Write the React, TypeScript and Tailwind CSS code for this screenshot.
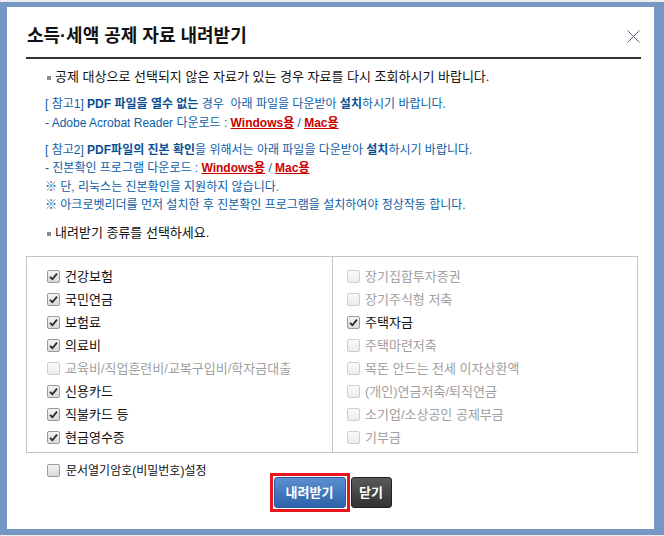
import { ReactNode } from "react";

const FONT = { fontFamily: "'Liberation Sans', 'Noto Sans CJK KR', sans-serif" };

interface CheckItem {
  label: string;
  checked: boolean;
  disabled?: boolean;
}

const leftItems: CheckItem[] = [
  { label: "건강보험", checked: true },
  { label: "국민연금", checked: true },
  { label: "보험료", checked: true },
  { label: "의료비", checked: true },
  { label: "교육비/직업훈련비/교복구입비/학자금대출", checked: false, disabled: true },
  { label: "신용카드", checked: true },
  { label: "직불카드 등", checked: true },
  { label: "현금영수증", checked: true },
];

const rightItems: CheckItem[] = [
  { label: "장기집합투자증권", checked: false, disabled: true },
  { label: "장기주식형 저축", checked: false, disabled: true },
  { label: "주택자금", checked: true },
  { label: "주택마련저축", checked: false, disabled: true },
  { label: "목돈 안드는 전세 이자상환액", checked: false, disabled: true },
  { label: "(개인)연금저축/퇴직연금", checked: false, disabled: true },
  { label: "소기업/소상공인 공제부금", checked: false, disabled: true },
  { label: "기부금", checked: false, disabled: true },
];

const Box = ({ checked, disabled }: { checked: boolean; disabled?: boolean }) => (
  <span
    className={`relative flex size-[13px] shrink-0 items-center justify-center rounded-[2px] border ${
      disabled
        ? "border-[#cfcfcf] bg-gradient-to-b from-[#fafafa] to-[#ececec]"
        : "border-[#9a9a9a] bg-gradient-to-b from-[#f4f4f4] to-[#d9d9d9]"
    }`}
  >
    {checked && (
      <svg width="9" height="9" viewBox="0 0 9 9">
        <path d="M1 4.8 L3.4 7.2 L8 1.6" fill="none" stroke="#2b2b2b" strokeWidth="1.8" />
      </svg>
    )}
  </span>
);

const CheckRow = ({ item }: { item: CheckItem }) => (
  <div className="flex h-[23px] items-center gap-[5px]">
    <Box checked={item.checked} disabled={item.disabled} />
    <span className={`text-[13px] ${item.disabled ? "text-[#a0a0a0]" : "text-[#111]"}`}>
      {item.label}
    </span>
  </div>
);

const Blue = ({ children }: { children: ReactNode }) => (
  <b className="font-bold text-[#0a4f92]">{children}</b>
);

const RedLink = ({ children }: { children: ReactNode }) => (
  <a className="font-bold text-[#cc0000] underline">{children}</a>
);

const Bullet = () => (
  <span className="mr-[4px] inline-block size-[4px] bg-[#8c8c8c] align-middle" />
);

export default function App() {
  return (
    <div className="h-[536px] w-[664px] bg-[#ededed] pt-[2px]" style={FONT}>
      <div className="flex h-[533px] flex-col border-b-[6px] border-l-[7px] border-r-[10px] border-t-[5px] border-[#7597c4] bg-white">
        {/* Header */}
        <div className="flex h-[50px] items-center justify-between pl-[20px] pr-[14px] pt-[8px]">
          <h1 className="text-[18px] font-bold text-[#111]">소득·세액 공제 자료 내려받기</h1>
          <svg width="13" height="13" viewBox="0 0 13 13">
            <path d="M0.5 0.5 L12.5 12.5 M12.5 0.5 L0.5 12.5" stroke="#5a6080" strokeWidth="1" />
          </svg>
        </div>
        <div className="ml-[19px] mr-[13px] h-[2px] bg-[#333]" />

        {/* Notices */}
        <div className="text-[12px] leading-[18px]">
          <p className="ml-[40px] mt-[9px] h-[18px] text-[13px] text-[#111]">
            <Bullet />
            공제 대상으로 선택되지 않은 자료가 있는 경우 자료를 다시 조회하시기 바랍니다.
          </p>
          <div className="ml-[38px] mt-[9px] text-[#0b5ea6]">
            <p className="h-[19px]">
              [ 참고1] <Blue>PDF 파일을 열수 없는</Blue> 경우&nbsp; 아래 파일을 다운받아{" "}
              <Blue>설치</Blue>하시기 바랍니다.
            </p>
            <p className="h-[18px]">
              - Adobe Acrobat Reader 다운로드 : <RedLink>Windows용</RedLink> /{" "}
              <RedLink>Mac용</RedLink>
            </p>
          </div>
          <div className="ml-[38px] mt-[9px] text-[#0b5ea6]">
            <p className="h-[18px]">
              [ 참고2] <Blue>PDF파일의 진본 확인</Blue>을 위해서는 아래 파일을 다운받아{" "}
              <Blue>설치</Blue>하시기 바랍니다.
            </p>
            <p className="h-[19px]">
              - 진본확인 프로그램 다운로드 : <RedLink>Windows용</RedLink> /{" "}
              <RedLink>Mac용</RedLink>
            </p>
            <p className="h-[18px]">※ 단, 리눅스는 진본확인을 지원하지 않습니다.</p>
            <p className="h-[18px]">
              ※ 아크로벳리더를 먼저 설치한 후 진본확인 프로그램을 설치하여야 정상작동 합니다.
            </p>
          </div>
          <p className="ml-[40px] mt-[10px] h-[18px] text-[13px] text-[#111]">
            <Bullet />
            내려받기 종류를 선택하세요.
          </p>
        </div>

        {/* Check list */}
        <div className="ml-[19px] mt-[14px] flex h-[197px] w-[612px] border border-[#c4c4c4]">
          <div className="w-[306px] border-r border-[#c4c4c4] pl-[20px] pt-[8px]">
            {leftItems.map((item) => (
              <CheckRow key={item.label} item={item} />
            ))}
          </div>
          <div className="flex-1 pl-[14px] pt-[8px]">
            {rightItems.map((item) => (
              <CheckRow key={item.label} item={item} />
            ))}
          </div>
        </div>

        {/* Password option */}
        <div className="ml-[40px] mt-[13px] flex h-[9px] items-center gap-[6px]">
          <Box checked={false} />
          <span className="text-[12px] text-[#111]">문서열기암호(비밀번호)설정</span>
        </div>

        {/* Buttons */}
        <div className="mt-[-2px] flex items-start justify-center gap-[1px]">
          <div className="border-[3px] border-[#e8141e] p-[1px]">
            <button className="flex h-[31px] w-[72px] items-center justify-center rounded-[3px] border border-[#2a5d9e] bg-gradient-to-b from-[#5b8fd0] to-[#2f63a9] text-[13px] font-bold text-white">
              내려받기
            </button>
          </div>
          <button className="mt-[4px] flex h-[31px] w-[41px] items-center justify-center rounded-[3px] border border-[#222] bg-gradient-to-b from-[#5a5a5a] to-[#333] text-[13px] font-bold text-white">
            닫기
          </button>
        </div>
      </div>
    </div>
  );
}
